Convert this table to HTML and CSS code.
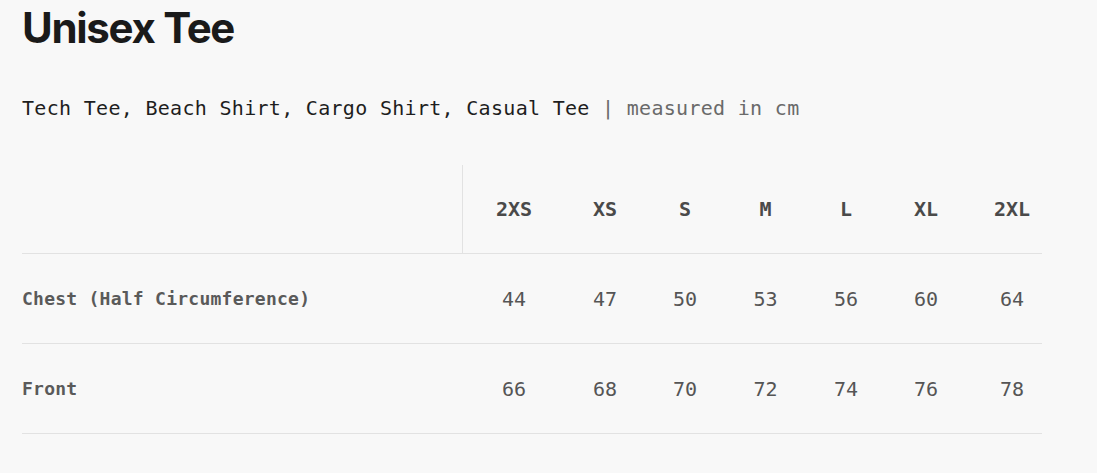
FILE: index.html
```html
<!DOCTYPE html>
<html>
<head>
<meta charset="utf-8">
<link rel="stylesheet" href="styles.css">
</head>
<body>
<main class="page">
  <h1 class="title">Unisex Tee</h1>
  <p class="subtitle">Tech Tee, Beach Shirt, Cargo Shirt, Casual Tee <span class="muted">| measured in cm</span></p>
  <div class="chart">
    <div class="row head">
      <div class="label corner"></div>
      <div class="cell">2XS</div>
      <div class="cell">XS</div>
      <div class="cell">S</div>
      <div class="cell">M</div>
      <div class="cell">L</div>
      <div class="cell">XL</div>
      <div class="cell last">2XL</div>
    </div>
    <div class="row">
      <div class="label">Chest (Half Circumference)</div>
      <div class="cell">44</div>
      <div class="cell">47</div>
      <div class="cell">50</div>
      <div class="cell">53</div>
      <div class="cell">56</div>
      <div class="cell">60</div>
      <div class="cell last">64</div>
    </div>
    <div class="row">
      <div class="label">Front</div>
      <div class="cell">66</div>
      <div class="cell">68</div>
      <div class="cell">70</div>
      <div class="cell">72</div>
      <div class="cell">74</div>
      <div class="cell">76</div>
      <div class="cell last">78</div>
    </div>
  </div>
</main>
</body>
</html>
```
FILE: styles.css
```css
html, body {
  margin: 0;
  padding: 0;
  background: #f8f8f8;
}
.page {
  padding: 6px 22px 0 22px;
}
.title {
  margin: 0;
  font-family: Inter, "Liberation Sans", sans-serif;
  font-weight: 700;
  font-size: 42px;
  line-height: 44px;
  letter-spacing: -1.3px;
  color: #1a1a1a;
}
.subtitle {
  margin: 46px 0 0 0;
  font-family: "DejaVu Sans Mono", monospace;
  font-size: 20px;
  line-height: 24px;
  letter-spacing: 0.3px;
  color: #1e1e1e;
}
.muted {
  color: #6a6a6a;
}
.chart {
  margin-top: 45px;
  width: 1020px;
}
.row {
  box-sizing: border-box;
  display: grid;
  grid-template-columns: 441px 102px 80px 80px 81px 80px 80px 76px;
  height: 90px;
  align-items: center;
  border-bottom: 1px solid #e2e2e2;
}
.row.head {
  height: 89px;
}
.corner {
  align-self: stretch;
  border-right: 1px solid #e2e2e2;
}
.label {
  font-family: "DejaVu Sans Mono", monospace;
  font-weight: 700;
  font-size: 18px;
  letter-spacing: 0.25px;
  color: #5a5a5a;
}
.cell {
  text-align: center;
  font-family: "DejaVu Sans Mono", monospace;
  font-size: 20px;
  color: #555;
}
.head .cell {
  font-weight: 700;
  color: #4a4a4a;
}
.cell.last {
  padding-left: 16px;
}
```
